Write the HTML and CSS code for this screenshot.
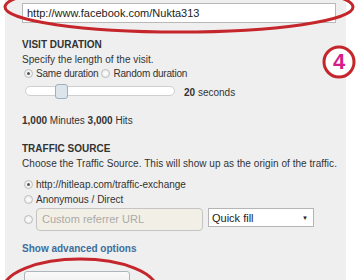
FILE: index.html
```html
<!DOCTYPE html>
<html>
<head>
  <title>Add website</title>
  <link rel="stylesheet" href="styles.css">
</head>
<body>

  <div class="panel">
    <div class="url">http://www.facebook.com/Nukta313</div>

    <h3 class="title first">VISIT DURATION</h3>
    <p class="hint">Specify the length of the visit.</p>
    <div class="choice">
      <span class="radio on"></span><span class="lbl">Same duration</span>
      <span class="radio"></span><span class="lbl">Random duration</span>
    </div>
    <div class="slider-row">
      <div class="track"><span class="handle"></span></div>
      <span class="secs"><b>20</b> seconds</span>
    </div>

    <p class="stats"><b>1,000</b> Minutes <b>3,000</b> Hits</p>

    <h3 class="title">TRAFFIC SOURCE</h3>
    <p class="hint">Choose the Traffic Source. This will show up as the origin of the traffic.</p>

    <div class="opts">
      <div class="opt"><span class="radio on"></span>http://hitleap.com/traffic-exchange</div>
      <div class="opt"><span class="radio"></span>Anonymous / Direct</div>
      <div class="opt custom">
        <span class="radio"></span>
        <div class="referrer">Custom referrer URL</div>
        <div class="select">Quick fill<span class="arrow">&#9660;</span></div>
      </div>
    </div>

    <a class="advanced" href="#">Show advanced options</a>

    <div class="actions">
      <button class="save">Add website</button>
    </div>
  </div>

  <!-- marcas rojas dibujadas encima -->
  <svg class="marks" width="360" height="280" viewBox="0 0 360 280">
    <ellipse cx="179" cy="7" rx="174" ry="25" fill="none" stroke="#c4262b" stroke-width="3"/>
    <ellipse cx="80" cy="290" rx="77" ry="31" fill="none" stroke="#c4262b" stroke-width="3"/>
    <circle cx="339" cy="62" r="15" fill="#fff" stroke="#c4262b" stroke-width="3"/>
  </svg>
  <span class="step">4</span>

</body>
</html>
```

FILE: styles.css
```css
body {
  margin: 0;
  background-color: #fff;
  font-family: "Liberation Sans", Arial, sans-serif;
  font-size: 10px;
  color: #333;
}

.panel {
  margin-left: 5px;
  width: 341px;
  height: 280px;
  padding: 3px 0 0 17px;
  box-sizing: border-box;
  background-color: #efefef; /* gris claro */
  overflow: hidden;
}

.url {
  width: 314px;
  height: 20px;
  box-sizing: border-box;
  padding: 0 4px;
  line-height: 18px;
  font-size: 11px;
  color: #222;
  background-color: #fff;
  border: 1px solid #b8b8b8;
}

.title {
  margin: 0;
  font-size: 10px;
  line-height: 14px;
  font-weight: bold;
  color: #333;
}

.title.first {
  margin-top: 15px;
}

.hint {
  margin: 1px 0 0;
  line-height: 14px;
  letter-spacing: 0.05px;
}

.choice {
  display: flex;
  align-items: center;
  height: 13px;
}

.lbl {
  margin-right: 1px;
  letter-spacing: -0.2px;
}

.radio {
  display: inline-block;
  flex: none;
  width: 7px;
  height: 7px;
  margin: 0 3px 0 2px;
  border: 1px solid #bdbdbd;
  border-radius: 50%;
  background: radial-gradient(circle, #fff 0, #e6e6e6 100%);
  position: relative;
}

.radio.on::after {
  content: "";
  position: absolute;
  left: 2px;
  top: 2px;
  width: 3px;
  height: 3px;
  border-radius: 50%;
  background-color: #555;
}

.slider-row {
  display: grid;
  grid-template-columns: 162px auto;
  align-items: center;
  margin-top: 3px;
  height: 16px;
}

.track {
  position: relative;
  width: 150px;
  height: 10px;
  margin-left: 3px;
  box-sizing: border-box;
  background-color: #fff;
  border: 1px solid #cfcfcf;
  border-radius: 5px;
}

.handle {
  position: absolute;
  left: 29px;
  top: -3px;
  width: 13px;
  height: 15px;
  box-sizing: border-box;
  border: 1px solid #9eb0bf;
  border-radius: 3px;
  background-color: #dce4ec;
}

.secs {
  margin-top: 2px;
}

.stats {
  margin: 15px 0 0;
  line-height: 14px;
}

.stats + .title {
  margin-top: 14px;
}

.opts {
  margin-top: 6px;
}

.opt {
  display: flex;
  align-items: center;
  height: 15px;
}

.opt.custom {
  margin-top: 1px;
  height: 22px;
}

.referrer {
  width: 167px;
  height: 23px;
  box-sizing: border-box;
  padding-left: 5px;
  line-height: 21px;
  font-size: 11px;
  color: #aaa;
  background-color: #f2f0e6;
  border: 1px solid #c4c4c4;
  border-radius: 4px;
}

.select {
  display: flex;
  justify-content: space-between;
  align-items: center;
  width: 106px;
  height: 19px;
  margin-left: 5px;
  margin-top: -3px;
  box-sizing: border-box;
  padding: 0 5px 0 3px;
  font-size: 11px;
  color: #222;
  background-color: #fff;
  border: 1px solid #b5b5b5;
}

.arrow {
  font-size: 6px;
}

.advanced {
  display: block;
  margin-top: 12px;
  line-height: 14px;
  font-weight: bold;
  color: #3d6e9c;
  text-decoration: none;
}

.actions {
  margin-top: 15px;
}

.save {
  width: 106px;
  height: 24px;
  margin-left: 2px;
  padding-top: 5px;
  font-family: "Liberation Sans", Arial, sans-serif;
  font-size: 11px;
  color: #333;
  vertical-align: top;
  background: linear-gradient(#fafafa, #e6e6e6);
  border: 1px solid #aeb6bd;
  border-radius: 3px;
}

.marks {
  position: absolute;
  left: 0;
  top: 0;
}

.step {
  position: absolute;
  left: 324px;
  top: 49px;
  width: 30px;
  text-align: center;
  font-size: 22px;
  line-height: 26px;
  font-weight: bold;
  color: #d41c8a;
}
```
